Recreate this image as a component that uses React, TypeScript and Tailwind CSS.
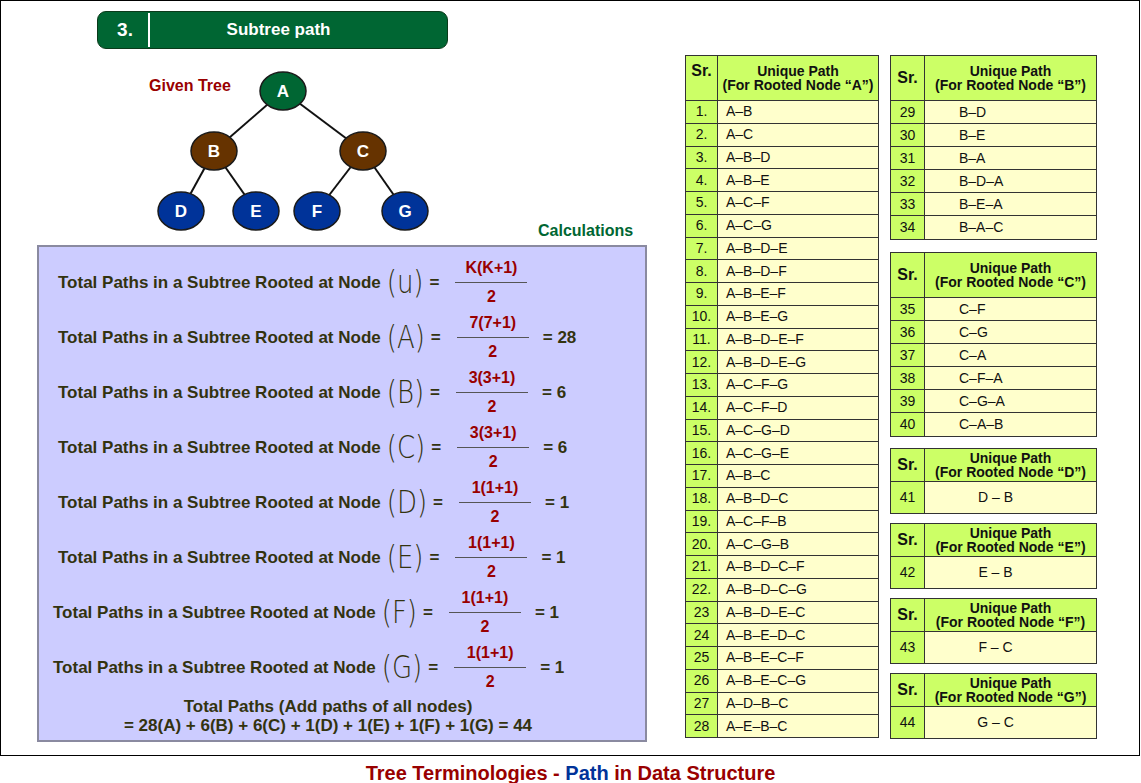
import React from "react";

const F = { fontFamily: '"Liberation Sans", Arial, sans-serif' };

const calc = [
  { n: "u", num: "K(K+1)", res: "", x: 57 },
  { n: "A", num: "7(7+1)", res: "= 28", x: 57 },
  { n: "B", num: "3(3+1)", res: "= 6", x: 57 },
  { n: "C", num: "3(3+1)", res: "= 6", x: 57 },
  { n: "D", num: "1(1+1)", res: "= 1", x: 57 },
  { n: "E", num: "1(1+1)", res: "= 1", x: 57 },
  { n: "F", num: "1(1+1)", res: "=  1", x: 52 },
  { n: "G", num: "1(1+1)", res: "= 1", x: 52 },
];

const pathsA = [
  "A–B","A–C","A–B–D","A–B–E","A–C–F","A–C–G","A–B–D–E","A–B–D–F","A–B–E–F","A–B–E–G",
  "A–B–D–E–F","A–B–D–E–G","A–C–F–G","A–C–F–D","A–C–G–D","A–C–G–E","A–B–C","A–B–D–C",
  "A–C–F–B","A–C–G–B","A–B–D–C–F","A–B–D–C–G","A–B–D–E–C","A–B–E–D–C","A–B–E–C–F",
  "A–B–E–C–G","A–D–B–C","A–E–B–C",
];

function Header({ node, h }: { node: string; h: string }) {
  return (
    <div className={`flex ${h} bg-[#ccff66] border-b border-[#333]`}>
      <div className="w-[34px] flex items-center justify-center border-r border-[#333] text-[16px] font-bold">Sr.</div>
      <div className="flex-1 flex flex-col items-center justify-center text-[14px] font-bold leading-[14px]">
        <span>Unique Path</span>
        <span>(For Rooted Node “{node}”)</span>
      </div>
    </div>
  );
}

function SmallTable({ node, rows, mb, rowH = "h-[23px]", center = false }: { node: string; rows: [string, string][]; mb: string; rowH?: string; center?: boolean }) {
  return (
    <div className={`w-[207px] border border-[#333] ${mb}`}>
      <Header node={node} h={rows.length > 1 ? "h-[45px]" : "h-[33px]"} />
      {rows.map(([s, p], i) => (
        <div key={i} className={`flex ${rowH} ${i < rows.length - 1 ? "border-b border-[#333]" : ""}`}>
          <div className="w-[34px] bg-[#ccff66] border-r border-[#333] flex items-center justify-center text-[14px]">{s}</div>
          <div className={`flex-1 bg-[#ffffcc] flex items-center text-[14px] ${center ? "justify-center pr-[30px]" : "pl-[34px]"}`}>{p}</div>
        </div>
      ))}
    </div>
  );
}

export default function App() {
  return (
    <div className="w-[1141px] h-[783px] bg-white text-[#111]" style={F}>
      <div className="w-[1140px] h-[756px] border border-black flex">
        <div className="w-[655px] relative">
          {/* header bar */}
          <div className="ml-[96px] mt-[10px] w-[351px] h-[38px] rounded-[9px] bg-[#006633] border border-[#0a3a1a] flex items-center text-white font-bold">
            <span className="w-[50px] text-center text-[19px] pl-[4px]">3.</span>
            <span className="w-[2px] h-[34px] bg-white"></span>
            <span className="flex-1 text-center text-[17px] pr-[40px]">Subtree path</span>
          </div>
          {/* tree */}
          <div className="relative h-[160px] mt-[0px]">
            <svg width="655" height="195" className="absolute left-0 top-0" viewBox="0 48 655 195">
              <g stroke="#111" strokeWidth="2">
                <line x1="282" y1="90" x2="213" y2="150" />
                <line x1="282" y1="90" x2="362" y2="150" />
                <line x1="213" y1="150" x2="180" y2="210" />
                <line x1="213" y1="150" x2="255" y2="210" />
                <line x1="362" y1="150" x2="316" y2="210" />
                <line x1="362" y1="150" x2="404" y2="210" />
              </g>
              {[
                ["A", 282, 90, "#006633"],
                ["B", 213, 150, "#663300"],
                ["C", 362, 150, "#663300"],
                ["D", 180, 210, "#003399"],
                ["E", 255, 210, "#003399"],
                ["F", 316, 210, "#003399"],
                ["G", 404, 210, "#003399"],
              ].map(([l, x, y, c]) => (
                <g key={l as string}>
                  <ellipse cx={x as number} cy={y as number} rx="23" ry="19" fill={c as string} stroke="#1a1a1a" strokeWidth="1.5" />
                  <text x={x as number} y={(y as number) + 6} textAnchor="middle" fill="white" fontSize="17" fontWeight="bold" fontFamily="Liberation Sans, Arial, sans-serif">{l}</text>
                </g>
              ))}
              <text x="148" y="90" fill="#990000" fontSize="16" fontWeight="bold" fontFamily="Liberation Sans, Arial, sans-serif">Given Tree</text>
            </svg>
          </div>
          <div className="ml-[537px] h-[36px] pt-[14px] text-[#006633] font-bold text-[16px] leading-[16px]">Calculations</div>
          {/* calc box */}
          <div className="ml-[36px] w-[610px] h-[497px] bg-[#ccccff] border-2 border-[#8a8aa0] pt-[8px] text-[#33330f] font-bold">
            {calc.map((c, i) => (
              <div key={i} className="h-[55px] flex items-center" style={{ paddingLeft: c.x - 38 }}>
                <span className="text-[17px]">Total Paths in a Subtree Rooted at Node</span>
                <span className="text-[26px] font-normal ml-[6px] scale-y-125 inline-block" style={{ fontFamily: '"DejaVu Sans", sans-serif', fontWeight: 200 }}>({c.n})</span>
                <span className="text-[17px] ml-[6px]">=</span>
                <div className="ml-[16px] w-[72px] flex flex-col items-center text-[#990000] text-[16px] leading-[18px]">
                  <span>{c.num}</span>
                  <span className="w-full h-[1.5px] bg-[#555] my-[5px]"></span>
                  <span>2</span>
                </div>
                <span className="text-[17px] ml-[14px]">{c.res}</span>
              </div>
            ))}
            <div className="text-center text-[17px] leading-[19px] mt-[2px] pr-[28px]">
              <div>Total Paths (Add paths of all nodes)</div>
              <div>= 28(A) + 6(B) + 6(C) + 1(D) + 1(E) + 1(F) + 1(G) = 44</div>
            </div>
          </div>
        </div>
        {/* tables */}
        <div className="ml-[29px] mt-[54px] flex gap-[11px]">
          <div className="w-[194px] h-[683px] border border-[#333] flex flex-col">
            <div className="flex h-[45px] bg-[#ccff66] border-b border-[#333]">
              <div className="w-[32px] border-r border-[#333] text-[16px] font-bold text-center pt-[3px]">Sr.</div>
              <div className="flex-1 flex flex-col items-center justify-center text-[14px] font-bold leading-[14px]">
                <span>Unique Path</span>
                <span>(For Rooted Node “A”)</span>
              </div>
            </div>
            {pathsA.map((p, i) => (
              <div key={i} className={`flex flex-1 ${i < 27 ? "border-b border-[#333]" : ""}`}>
                <div className="w-[32px] bg-[#ccff66] border-r border-[#333] flex items-center justify-center text-[14px]">{i < 22 ? `${i + 1}.` : i + 1}</div>
                <div className="flex-1 bg-[#ffffcc] flex items-center pl-[8px] text-[14px]">{p}</div>
              </div>
            ))}
          </div>
          <div className="flex flex-col">
            <SmallTable node="B" mb="mb-[12px]" rows={[["29","B–D"],["30","B–E"],["31","B–A"],["32","B–D–A"],["33","B–E–A"],["34","B–A–C"]]} />
            <SmallTable node="C" mb="mb-[11px]" rows={[["35","C–F"],["36","C–G"],["37","C–A"],["38","C–F–A"],["39","C–G–A"],["40","C–A–B"]]} />
            <SmallTable node="D" mb="mb-[9px]" rowH="h-[31px]" center rows={[["41","D – B"]]} />
            <SmallTable node="E" mb="mb-[9px]" rowH="h-[31px]" center rows={[["42","E – B"]]} />
            <SmallTable node="F" mb="mb-[9px]" rowH="h-[31px]" center rows={[["43","F – C"]]} />
            <SmallTable node="G" mb="" rowH="h-[31px]" center rows={[["44","G – C"]]} />
          </div>
        </div>
      </div>
      <div className="text-center text-[20px] font-bold text-[#990000] pt-[2px]">
        Tree Terminologies - <span className="text-[#003399]">Path</span> in Data Structure
      </div>
    </div>
  );
}
